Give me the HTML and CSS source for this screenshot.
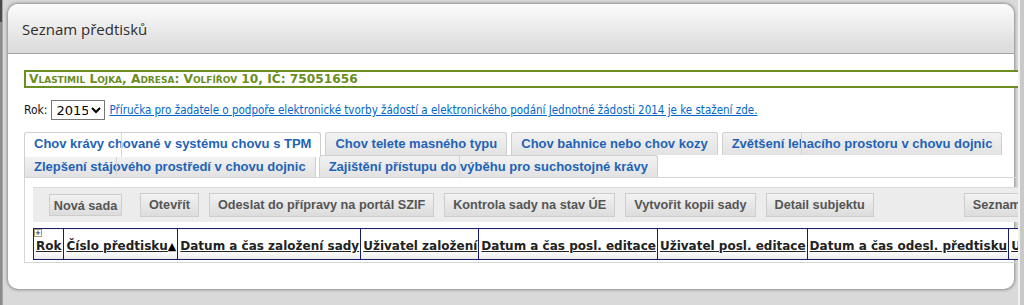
FILE: index.html
```html
<!DOCTYPE html>
<html>
  <head>
  <meta charset="UTF-8">
  <meta name="viewport" content="width=device-width, initial-scale=1.0">
  <link rel="stylesheet" href="styles.css">
  </head>
<body>
<div id="page">
  <div class="edge"><div class="edge-top"></div></div>
  <div id="viewport">
    <div id="dialog">
      <div class="dialog-head">Seznam předtisků</div>
      <div class="dialog-body">
        <div class="subject">Vlastimil Lojka, Adresa: Volfířov 10, IČ: 75051656</div>
        <div class="year-row">
          <span>Rok:</span>
          <select class="year"><option>2015</option></select>
          <a href="#">Příručka pro žadatele o podpoře elektronické tvorby žádostí a elektronického podání Jednotné žádosti 2014 je ke stažení zde.</a>
        </div>

        <div class="tabs">
          <div class="tab-row">
            <div class="tab active split-a">Chov krávy chované v systému chovu s TPM</div>
            <div class="tab">Chov telete masného typu</div>
            <div class="tab">Chov bahnice nebo chov kozy</div>
            <div class="tab split-d">Zvětšení lehacího prostoru v chovu dojnic</div>
          </div>
          <div class="tab-row second">
            <div class="tab split-b">Zlepšení stájového prostředí v chovu dojnic</div>
            <div class="tab split-c">Zajištění přístupu do výběhu pro suchostojné krávy</div>
          </div>
        </div>

        <div class="panel">
          <div class="toolbar">
            <span class="btn first">Nová sada</span>
            <span class="btn">Otevřít</span>
            <span class="btn">Odeslat do přípravy na portál SZIF</span>
            <span class="btn">Kontrola sady na stav ÚE</span>
            <span class="btn">Vytvořit kopii sady</span>
            <span class="btn">Detail subjektu</span>
            <span class="btn right">Seznam předtisků</span>
          </div>
          <table class="grid">
            <tr>
              <th class="first-col"><span class="plus">+</span><u>Rok</u></th>
              <th><u>Číslo předtisku</u><span class="sort">▲</span></th>
              <th><u>Datum a čas založení sady</u></th>
              <th><u>Uživatel založení</u></th>
              <th><u>Datum a čas posl. editace</u></th>
              <th><u>Uživatel posl. editace</u></th>
              <th><u>Datum a čas odesl. předtisku</u></th>
              <th><u>U</u></th>
            </tr>
          </table>
        </div>
      </div>
    </div>
  </div>
  <div class="scroll"></div>
</div>
</body>
</html>
```

FILE: styles.css
```css
body{
margin: 0;
background-color: #d9d9d9;
font-family: "DejaVu Sans", Verdana, sans-serif;
}

#page{
display: flex;
height: 305px;
}

.edge{
width: 2px;
background-color: #8c8c8c;
border-right: 1px solid #a6a6a6;
}

.edge-top{
height: 22px;
background-color: #4a4a4a;
}

#viewport{
width: 1017px;
overflow: hidden;
padding: 4px 0 0 5px;
box-sizing: border-box;
}

.scroll{
width: 4px;
background-color: #c9c9c9;
border-left: 2px solid #f1f1f1;
}

#dialog{
width: 1006px;
height: 285px;
background-color: #fff;
border-radius: 10px;
box-shadow: 0px 0px 3px 1px rgba(0,0,0,0.35);
}

.dialog-head{
height: 49px;
border-bottom: 1px solid #a3a3a3;
border-radius: 10px 10px 0 0;
background: linear-gradient(#fbfbfb, #dadada);
color: #2e2e2e;
font-family: "Open Sans", "DejaVu Sans", sans-serif;
font-size: 15px;
line-height: 51px;
padding-left: 14px;
}

.dialog-body{
padding: 16px 0 0 16px;
width: 1010px;
}

.subject{
border: 2px solid #6b8e23;
height: 14px;
background-color: #fff;
color: #6b8e23;
font-weight: bold;
font-variant: small-caps;
font-size: 12.2px;
line-height: 14px;
padding-left: 3px;
}

.year-row{
display: flex;
align-items: center;
margin-top: 12px;
height: 20px;
font-family: "DejaVu Sans Condensed", "DejaVu Sans", sans-serif;
font-size: 12px;
color: #111;
}

.year{
margin: 0 4px 0 4px;
width: 54px;
height: 20px;
font-family: "DejaVu Sans", sans-serif;
font-size: 13px;
border: 1px solid #767676;
background-color: #fff;
}

.year-row a{
color: #0066cc;
font-size: 11.5px;
}

.tabs{
margin-top: 12px;
font-family: "Liberation Sans", Arial, sans-serif;
font-weight: bold;
font-size: 13px;
}

.tab-row{
display: flex;
gap: 4px;
height: 23px;
}

.tab-row.second{
gap: 3px;
height: 22px;
}

.tab{
position: relative;
border: 1px solid #cfcfcf;
border-bottom: none;
border-radius: 3px 3px 0 0;
background: linear-gradient(#f2f2f2, #e2e2e2);
color: #1f63b6;
padding: 0 9px;
line-height: 22px;
}

.tab.active{
background: #fff;
height: 24px;
z-index: 1;
}

/* leftover edges of the wrapped tab strip */
.tab[class*="split"]::after{
content: "";
position: absolute;
top: 0;
bottom: 0;
width: 1px;
background-color: #d4d4d4;
}

.split-a::after{ left: 96px; }
.split-b::after{ left: 91px; }
.split-c::after{ left: 139px; }
.split-d::after{ left: 78px; }

.panel{
border: 1px solid #d6d6d6;
padding: 9px 0 6px 8px;
height: 69px;
}

.toolbar{
display: flex;
align-items: center;
height: 35px;
background-color: #ececec;
border-top: 1px solid #dcdcdc;
padding-left: 16px;
box-sizing: border-box;
font-family: "Liberation Sans", Arial, sans-serif;
font-weight: bold;
font-size: 12.7px;
}

.btn{
flex-shrink: 0;
height: 22px;
line-height: 22px;
padding: 0 8px;
margin-right: 10px;
border: 1px solid #cdcdcd;
background: linear-gradient(#f2f2f2, #dcdcdc);
color: #555;
white-space: nowrap;
}

.btn.first{
width: 73px;
padding: 0;
box-sizing: border-box;
text-align: center;
margin-right: 18px;
}

.btn.right{
margin-left: 80px;
}

.grid{
margin-top: 6px;
border-collapse: collapse;
border: 1px solid #1b1b6b;
font-size: 12px;
white-space: nowrap;
}

.grid th{
border-left: 1px solid #1b1b6b;
height: 26px;
padding: 4px 1px 0 2px;
background: linear-gradient(#fff 72%, #e9e9e9);
color: #222;
text-align: left;
}

.grid th.first-col{
position: relative;
border-left: none;
padding-right: 2px;
}

.plus{
position: absolute;
left: 0;
top: 0;
width: 6px;
height: 6px;
border: 1px solid #b59a6a;
font-size: 7px;
line-height: 6px;
text-align: center;
color: #333;
background-color: #fff;
}

.sort{
font-size: 11px;
color: #000;
}
```
